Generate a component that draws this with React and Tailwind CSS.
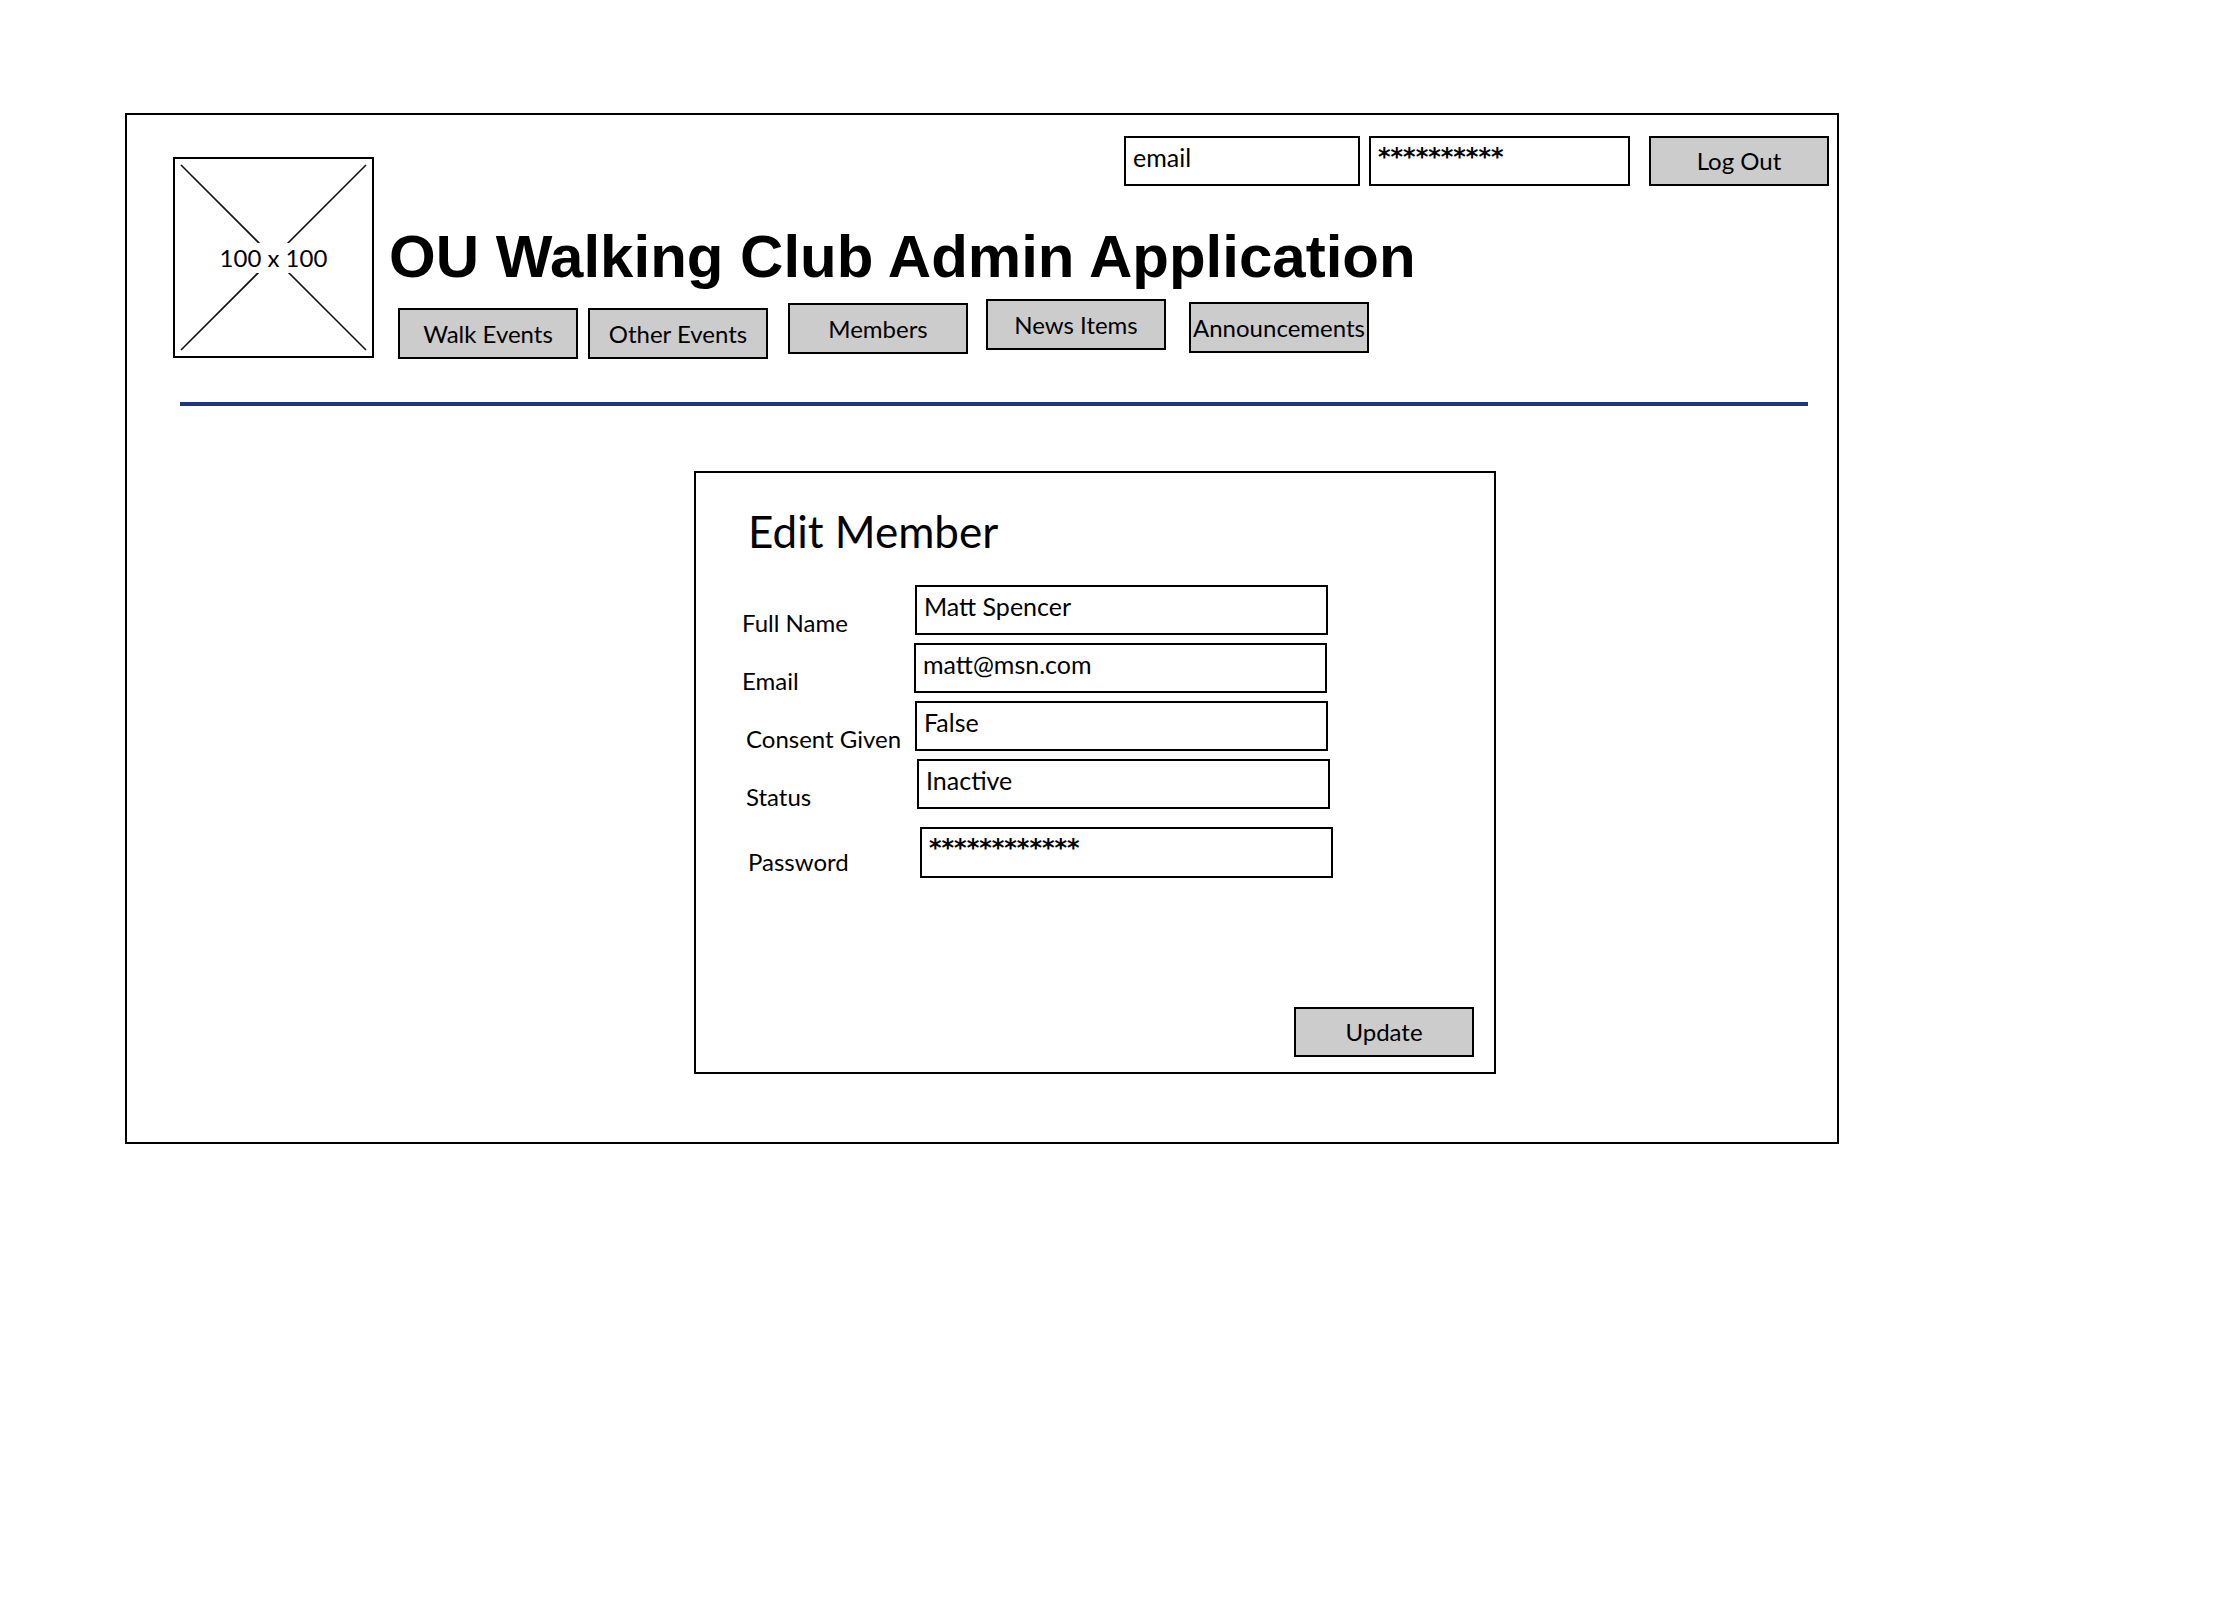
import React from "react";

const sketchFont = "font-['Lato',sans-serif]";
const starFont = "font-['DejaVu_Sans',sans-serif] font-bold text-[24px]";

// gray sketch-style button
const GrayButton = ({ label, className = "" }) => {
  return (
    <div
      className={`flex w-[180px] items-center justify-center border-2 border-black bg-[#cccccc] text-[24px] leading-none text-black ${className}`}
    >
      {label}
    </div>
  );
};

// white input box with text at the top-left
const Field = ({ value, className = "", textClass = "text-[25px]" }) => {
  return (
    <div
      className={`h-[50px] border-2 border-black bg-white px-[7px] pt-[7px] leading-none text-black ${className}`}
    >
      <span className={textClass}>{value}</span>
    </div>
  );
};

const App = () => {
  return (
    <div className={`min-h-[1598px] w-[2222px] bg-white pl-[125px] pt-[113px] ${sketchFont}`}>
      <div className="flex h-[1031px] w-[1714px] flex-col border-2 border-black">
        {/* Header */}
        <div className="flex pl-[46px] pr-[8px] pt-[21px]">
          {/* Logo placeholder */}
          <div className="relative mt-[21px] flex h-[201px] w-[201px] shrink-0 items-center justify-center border-2 border-black">
            <svg
              className="absolute inset-0 h-full w-full"
              viewBox="0 0 197 197"
              preserveAspectRatio="none"
            >
              <line x1="6" y1="6" x2="191" y2="191" stroke="#111" strokeWidth="1.6" />
              <line x1="191" y1="6" x2="6" y2="191" stroke="#111" strokeWidth="1.6" />
            </svg>
            <span className="relative bg-white px-[4px] py-[3px] text-[24px] leading-none">
              100 x 100
            </span>
          </div>

          {/* Right column */}
          <div className="ml-[15px] flex flex-1 flex-col">
            <div className="flex justify-end">
              <Field value="email" className="w-[236px] px-[6px]" />
              <Field value="**********" className="ml-[9px] w-[261px]" textClass={starFont} />
              <GrayButton label="Log Out" className="ml-[19px] h-[50px]" />
            </div>

            <h1 className="mt-[41px] font-['Liberation_Sans',Arial,sans-serif] text-[60px] font-bold leading-none text-black">
              OU Walking Club Admin Application
            </h1>

            <div className="ml-[9px] mt-[12px] flex items-start">
              <GrayButton label="Walk Events" className="mt-[9px] h-[51px]" />
              <GrayButton label="Other Events" className="ml-[10px] mt-[9px] h-[51px]" />
              <GrayButton label="Members" className="ml-[20px] mt-[4px] h-[51px]" />
              <GrayButton label="News Items" className="ml-[18px] h-[51px]" />
              <GrayButton label="Announcements" className="ml-[23px] mt-[3px] h-[51px]" />
            </div>
          </div>
        </div>

        {/* Divider */}
        <div className="ml-[53px] mr-[29px] mt-[43px] h-[4px] bg-[#1e3580]" />

        {/* Edit Member form */}
        <div className="ml-[567px] mt-[65px] flex h-[603px] w-[802px] flex-col border-2 border-black text-black">
          <h2 className="pl-[52px] pt-[36px] text-[44px] font-normal leading-none">
            Edit Member
          </h2>

          <div className="mt-[32px] flex items-end">
            <span className="w-[219px] shrink-0 pl-[46px] text-[24px] leading-none">Full Name</span>
            <Field value="Matt Spencer" className="w-[413px]" />
          </div>
          <div className="mt-[8px] flex items-end">
            <span className="w-[218px] shrink-0 pl-[46px] text-[24px] leading-none">Email</span>
            <Field value="matt@msn.com" className="w-[413px] px-[6px]" />
          </div>
          <div className="mt-[8px] flex items-end">
            <span className="w-[219px] shrink-0 pl-[50px] text-[24px] leading-none">Consent Given</span>
            <Field value="False" className="w-[413px] px-[6px]" />
          </div>
          <div className="mt-[8px] flex items-end">
            <span className="w-[221px] shrink-0 pl-[50px] text-[24px] leading-none">Status</span>
            <Field value="Inactive" className="w-[413px] px-[6px]" />
          </div>
          <div className="mt-[18px] flex items-end">
            <span className="mb-[4px] w-[224px] shrink-0 pl-[52px] text-[24px] leading-none">Password</span>
            <Field value="************" className="h-[51px] w-[413px] px-[6px]" textClass={starFont} />
          </div>

          <div className="mt-auto flex justify-end pb-[15px] pr-[20px]">
            <GrayButton label="Update" className="h-[50px]" />
          </div>
        </div>
      </div>
    </div>
  );
};

export default App;
